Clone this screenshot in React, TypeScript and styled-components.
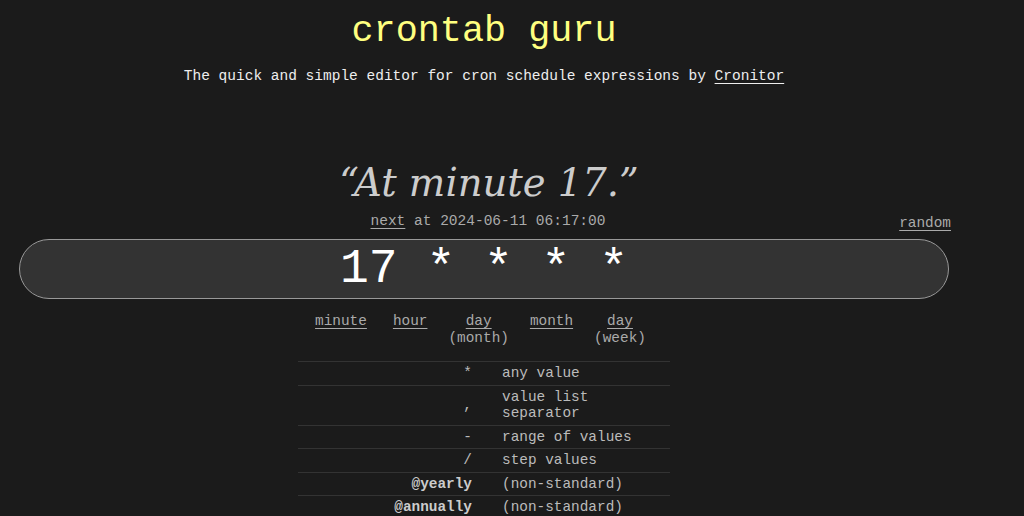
import styled, { createGlobalStyle } from 'styled-components';

const GlobalStyle = createGlobalStyle`
  html, body {
    margin: 0;
    padding: 0;
    background: #1b1b1b;
    color: #ddd;
    font-family: 'Liberation Mono', 'DejaVu Sans Mono', monospace;
    font-size: 14.4px;
  }
  a {
    color: inherit;
    text-decoration: underline;
    text-underline-offset: 3px;
  }
`;

const Page = styled.div`
  width: 930px;
  margin-left: 19px;
  display: flex;
  flex-direction: column;
  align-items: center;
`;

const Title = styled.h1`
  margin: 9px 0 0;
  font-size: 36.8px;
  font-weight: normal;
  line-height: 44px;
  color: #ffff80;
`;

const Tagline = styled.p`
  margin: 14px 0 0;
  font-size: 14.5px;
  color: #eee;
  line-height: 18px;
`;

const Description = styled.div`
  margin-top: 73px;
  padding-left: 10px;
  font-family: 'DejaVu Serif', 'Liberation Serif', serif;
  font-style: italic;
  font-size: 38.5px;
  line-height: 50px;
  color: #ccc;
`;

const NextRow = styled.div`
  align-self: stretch;
  display: grid;
  grid-template-columns: 1fr auto 1fr;
  align-items: end;
  margin-top: 4px;
  color: #aaa;
  line-height: 18px;
`;

const NextText = styled.div`
  grid-column: 2;
  padding-left: 8px;
  font-size: 14.5px;
`;

const RandomLink = styled.a`
  grid-column: 3;
  justify-self: end;
  margin-bottom: -2px;
  margin-right: -2px;
`;

const CronInput = styled.div`
  align-self: stretch;
  box-sizing: border-box;
  height: 60px;
  margin-top: 9px;
  border: 1px solid #999;
  border-radius: 30px;
  background: #333;
  color: #fff;
  font-size: 48px;
  line-height: 58px;
  text-align: center;
  white-space: pre;
`;

const Parts = styled.div`
  display: flex;
  gap: 21px;
  margin-top: 14px;
  margin-right: 7px;
  color: #aaa;
  line-height: 17px;
`;

const Part = styled.div`
  display: flex;
  flex-direction: column;
  align-items: center;

  &:first-child {
    margin-right: 5px;
  }
`;

const Legend = styled.table`
  margin-top: 14px;
  width: 372px;
  border-collapse: collapse;
  color: #bbb;
  line-height: 16.5px;

  td {
    border-top: 1px solid #333;
    padding: 3px 0;
    vertical-align: middle;
  }
`;

const Sym = styled.td<{ $bold?: boolean }>`
  text-align: right;
  width: 174px;
  font-weight: ${(p) => (p.$bold ? 'bold' : 'normal')};
  color: ${(p) => (p.$bold ? '#ccc' : '#bbb')};
`;

const Meaning = styled.td`
  padding-left: 30px !important;
`;

const PARTS = [
  { label: 'minute' },
  { label: 'hour' },
  { label: 'day', sub: '(month)' },
  { label: 'month' },
  { label: 'day', sub: '(week)' },
];

const LEGEND = [
  { sym: '*', text: 'any value' },
  { sym: ',', text: 'value list\nseparator' },
  { sym: '-', text: 'range of values' },
  { sym: '/', text: 'step values' },
  { sym: '@yearly', text: '(non-standard)', bold: true },
  { sym: '@annually', text: '(non-standard)', bold: true },
];

export default function App() {
  return (
    <>
      <GlobalStyle />
      <Page>
        <Title>crontab guru</Title>
        <Tagline>
          The quick and simple editor for cron schedule expressions by <a href="#">Cronitor</a>
        </Tagline>
        <Description>“At minute 17.”</Description>
        <NextRow>
          <NextText>
            <a href="#">next</a> at 2024-06-11 06:17:00
          </NextText>
          <RandomLink href="#">random</RandomLink>
        </NextRow>
        <CronInput>17 * * * *</CronInput>
        <Parts>
          {PARTS.map((p, i) => (
            <Part key={i}>
              <a href="#">{p.label}</a>
              {p.sub && <span>{p.sub}</span>}
            </Part>
          ))}
        </Parts>
        <Legend>
          <tbody>
            {LEGEND.map((row) => (
              <tr key={row.sym}>
                <Sym $bold={row.bold}>{row.sym}</Sym>
                <Meaning>
                  {row.text.split('\n').map((l) => (
                    <div key={l}>{l}</div>
                  ))}
                </Meaning>
              </tr>
            ))}
          </tbody>
        </Legend>
      </Page>
    </>
  );
}
